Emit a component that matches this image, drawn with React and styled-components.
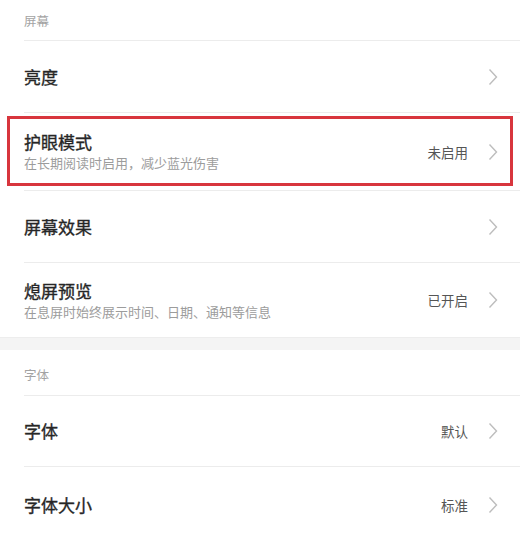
import React from 'react'
import styled, { createGlobalStyle } from 'styled-components'

const GlobalStyle = createGlobalStyle`
body{
  margin:0;
  background:#fff;
  font-family:"Noto Sans CJK SC","Noto Sans",sans-serif;
}
`

const Page = styled.div`
width:520px;
background:#fff;
`

const Section = styled.section`
background:#fff;
`

const Gap = styled.div`
height:12px;
background:#f4f4f4;
border-top:1px solid #ededed;
`

const SectionHeader = styled.div`
margin-left:24px;
height:${p => p.$h || 40}px;
display:flex;
align-items:center;
padding-top:${p => p.$pt || 0}px;
box-sizing:border-box;
font-size:12.5px;
color:#a3a3a3;
border-bottom:1px solid #ececec;
`

const Row = styled.div`
position:relative;
padding-left:24px;

${p => p.$marked && `
  &::after{
    content:"";
    position:absolute;
    left:7px;
    right:7px;
    top:3px;
    bottom:5px;
    border:3px solid #d8353d;
  }
`}
`

const RowInner = styled.div`
display:flex;
align-items:center;
height:${p => p.$h}px;
padding-right:22px;
box-sizing:border-box;
border-bottom:${p => p.$last ? 'none' : '1px solid #ececec'};
`

const Texts = styled.div`
flex:1;
display:flex;
flex-direction:column;
`

const Title = styled.div`
font-size:17px;
font-weight:400;
color:#262626;
line-height:22px;
-webkit-text-stroke:0.35px #262626;
`

const Sub = styled.div`
font-size:13px;
color:#9c9c9c;
line-height:18px;
margin-top:1px;
`

const Value = styled.span`
font-size:13.5px;
color:#555;
margin-right:20px;
`

const Chevron = () => (
  <svg width="10" height="18" viewBox="0 0 10 18">
    <path d="M1.5 1.5 L8.5 9 L1.5 16.5" fill="none" stroke="#bdbdbd" strokeWidth="1.4" />
  </svg>
)

const Item = ({ title, sub, value, h, marked, last }) => (
  <Row $marked={marked}>
    <RowInner $h={h} $last={last}>
      <Texts>
        <Title>{title}</Title>
        {sub && <Sub>{sub}</Sub>}
      </Texts>
      {value && <Value>{value}</Value>}
      <Chevron />
    </RowInner>
  </Row>
)

export default function App() {
  return (
    <Page>
      <GlobalStyle />
      <Section>
        <SectionHeader $h={41}>屏幕</SectionHeader>
        <Item title="亮度" h={72} />
        <Item title="护眼模式" sub="在长期阅读时启用，减少蓝光伤害" value="未启用" h={78} marked />
        <Item title="屏幕效果" h={72} />
        <Item title="熄屏预览" sub="在息屏时始终展示时间、日期、通知等信息" value="已开启" h={74} last />
      </Section>
      <Gap />
      <Section>
        <SectionHeader $h={46} $pt={4}>字体</SectionHeader>
        <Item title="字体" value="默认" h={71} />
        <Item title="字体大小" value="标准" h={76} last />
      </Section>
    </Page>
  )
}
